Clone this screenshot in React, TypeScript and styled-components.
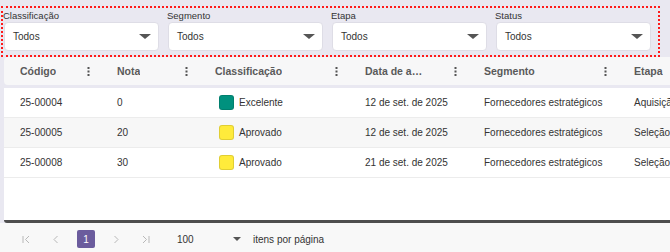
import React from "react";
import styled, { createGlobalStyle } from "styled-components";

const GlobalStyle = createGlobalStyle`
  html, body { margin: 0; padding: 0; }
  body {
    background: #e9e8f1;
    font-family: "Liberation Sans", Arial, sans-serif;
    color: #333;
    overflow: hidden;
    width: 670px;
    height: 252px;
  }
`;

const Page = styled.div`
  display: flex;
  flex-direction: column;
  width: 670px;
`;

const FilterBar = styled.div`
  margin: 6px 10px 0 1px;
  border: 2px dotted #ff1a1a;
  padding: 1px 7px 4px 1px;
  display: grid;
  grid-template-columns: repeat(4, 155px);
  column-gap: 9px;
`;

const Field = styled.div`
  display: flex;
  flex-direction: column;
`;

const FieldLabel = styled.label`
  font-size: 9.5px;
  line-height: 13px;
  color: #333;
  margin-left: -1px;
`;

const SelectBox = styled.div`
  height: 29px;
  box-sizing: border-box;
  background: #fff;
  border: 1px solid #dedde6;
  border-radius: 4px;
  display: flex;
  align-items: center;
  justify-content: space-between;
  padding: 0 7px 0 8px;
  font-size: 10px;
  color: #333;
`;

const Caret = styled.span<{ $w: number; $h: number }>`
  width: 0;
  height: 0;
  border-left: ${(p) => p.$w / 2}px solid transparent;
  border-right: ${(p) => p.$w / 2}px solid transparent;
  border-top: ${(p) => p.$h}px solid #555;
`;

const TableWrap = styled.div`
  margin-left: 4px;
  width: 666px;
  overflow: hidden;
  display: flex;
  flex-direction: column;
`;

const HeaderRow = styled.div`
  display: flex;
  width: 764px;
  height: 28px;
  background: #f7f7f8;
  border-radius: 4px;
`;

const HeaderCell = styled.div<{ $w: number }>`
  width: ${(p) => p.$w}px;
  flex: none;
  box-sizing: border-box;
  padding: 0 11px 0 16px;
  display: flex;
  align-items: center;
  justify-content: space-between;
  font-size: 10.5px;
  font-weight: 700;
  color: #5a5a5a;
`;

const HeaderText = styled.span<{ $max?: number }>`
  white-space: nowrap;
  overflow: hidden;
  text-overflow: ellipsis;
  max-width: ${(p) => (p.$max ? `${p.$max}px` : "none")};
`;

const Body = styled.div`
  margin-top: 3px;
  width: 764px;
  height: 135px;
  background: #fff;
  border-radius: 4px 4px 3px 3px;
  border-bottom: 3px solid #4e4e4e;
  box-sizing: border-box;
  display: flex;
  flex-direction: column;
`;

const Row = styled.div<{ $alt?: boolean }>`
  display: flex;
  height: 30px;
  box-sizing: border-box;
  border-bottom: 1px solid #ececec;
  background: ${(p) => (p.$alt ? "#f7f7f7" : "#fff")};
`;

const Cell = styled.div<{ $w: number }>`
  width: ${(p) => p.$w}px;
  flex: none;
  box-sizing: border-box;
  padding-left: 16px;
  display: flex;
  align-items: center;
  font-size: 10px;
  color: #333;
  white-space: nowrap;
`;

const Swatch = styled.span<{ $color: string }>`
  width: 15px;
  height: 15px;
  border-radius: 3px;
  background: ${(p) => p.$color};
  border: 1px solid rgba(0, 0, 0, 0.12);
  box-sizing: border-box;
  margin-left: 4px;
  margin-right: 5px;
`;

const Pager = styled.div`
  height: 32px;
  background: #f8f8f8;
  display: flex;
  align-items: center;
  padding-left: 11px;
  font-size: 10px;
  color: #333;
`;

const PagerButton = styled.div`
  width: 30px;
  height: 18px;
  display: flex;
  align-items: center;
  justify-content: center;
  color: #b5b5b5;
`;

const PageNumber = styled.div`
  width: 18px;
  height: 18px;
  border-radius: 2px;
  background: #6b5c9d;
  color: #fff;
  font-size: 10px;
  display: flex;
  align-items: center;
  justify-content: center;
`;

const PageSize = styled.div`
  margin-left: 16px;
  width: 64px;
  display: flex;
  align-items: center;
  justify-content: space-between;
`;

const PagerLabel = styled.span`
  margin-left: 12px;
`;

const Kebab = () => (
  <svg width="3" height="9" viewBox="0 0 3 9">
    <rect x="0.5" y="0" width="2" height="2" fill="#555" />
    <rect x="0.5" y="3.5" width="2" height="2" fill="#555" />
    <rect x="0.5" y="7" width="2" height="2" fill="#555" />
  </svg>
);

const PagerIcon = ({ kind }: { kind: "first" | "prev" | "next" | "last" }) => {
  const paths: Record<string, string> = {
    first: "M1 1 V8 M7 1 L3.5 4.5 L7 8",
    prev: "M5.5 1 L2 4.5 L5.5 8",
    next: "M2.5 1 L6 4.5 L2.5 8",
    last: "M7 1 V8 M1 1 L4.5 4.5 L1 8",
  };
  return (
    <svg width="8" height="9" viewBox="0 0 8 9">
      <path d={paths[kind]} stroke="#b8b8b8" strokeWidth="1" fill="none" />
    </svg>
  );
};

const columns = [
  { key: "codigo", label: "Código", w: 97 },
  { key: "nota", label: "Nota", w: 98 },
  { key: "class", label: "Classificação", w: 150 },
  { key: "data", label: "Data de atualização", w: 119, max: 59 },
  { key: "seg", label: "Segmento", w: 150 },
  { key: "etapa", label: "Etapa", w: 150 },
];

const rows = [
  { codigo: "25-00004", nota: "0", cls: "Excelente", color: "#00917e", data: "12 de set. de 2025", seg: "Fornecedores estratégicos", etapa: "Aquisição" },
  { codigo: "25-00005", nota: "20", cls: "Aprovado", color: "#ffeb3b", data: "12 de set. de 2025", seg: "Fornecedores estratégicos", etapa: "Seleção" },
  { codigo: "25-00008", nota: "30", cls: "Aprovado", color: "#ffeb3b", data: "21 de set. de 2025", seg: "Fornecedores estratégicos", etapa: "Seleção" },
];

const filters = ["Classificação", "Segmento", "Etapa", "Status"];

export default function App() {
  return (
    <>
      <GlobalStyle />
      <Page>
        <FilterBar>
          {filters.map((f) => (
            <Field key={f}>
              <FieldLabel>{f}</FieldLabel>
              <SelectBox>
                <span>Todos</span>
                <Caret $w={12} $h={5} />
              </SelectBox>
            </Field>
          ))}
        </FilterBar>
        <TableWrap>
          <HeaderRow>
            {columns.map((c) => (
              <HeaderCell key={c.key} $w={c.w}>
                <HeaderText $max={c.max}>{c.label}</HeaderText>
                {c.key !== "etapa" && <Kebab />}
              </HeaderCell>
            ))}
          </HeaderRow>
          <Body>
            {rows.map((r, i) => (
              <Row key={r.codigo} $alt={i % 2 === 1}>
                <Cell $w={97}>{r.codigo}</Cell>
                <Cell $w={98}>{r.nota}</Cell>
                <Cell $w={150}>
                  <Swatch $color={r.color} />
                  {r.cls}
                </Cell>
                <Cell $w={119}>{r.data}</Cell>
                <Cell $w={150}>{r.seg}</Cell>
                <Cell $w={150}>{r.etapa}</Cell>
              </Row>
            ))}
          </Body>
        </TableWrap>
        <Pager>
          <PagerButton><PagerIcon kind="first" /></PagerButton>
          <PagerButton><PagerIcon kind="prev" /></PagerButton>
          <PagerButton><PageNumber>1</PageNumber></PagerButton>
          <PagerButton><PagerIcon kind="next" /></PagerButton>
          <PagerButton><PagerIcon kind="last" /></PagerButton>
          <PageSize>
            <span>100</span>
            <Caret $w={8} $h={4} />
          </PageSize>
          <PagerLabel>itens por página</PagerLabel>
        </Pager>
      </Page>
    </>
  );
}
